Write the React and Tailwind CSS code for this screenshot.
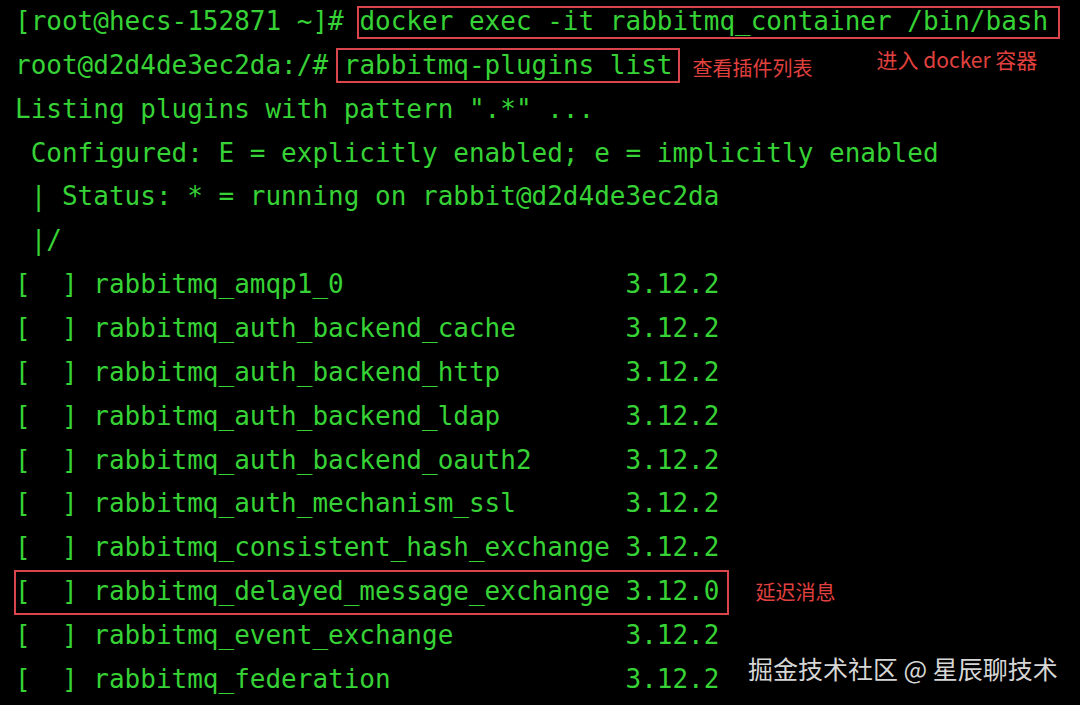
import React from "react";

const mono = { fontFamily: '"DejaVu Sans Mono", "Liberation Mono", monospace' };
const cjk = { fontFamily: '"Noto Sans CJK SC", "Noto Sans", sans-serif' };

const plugins = [
  ["rabbitmq_amqp1_0", "3.12.2"],
  ["rabbitmq_auth_backend_cache", "3.12.2"],
  ["rabbitmq_auth_backend_http", "3.12.2"],
  ["rabbitmq_auth_backend_ldap", "3.12.2"],
  ["rabbitmq_auth_backend_oauth2", "3.12.2"],
  ["rabbitmq_auth_mechanism_ssl", "3.12.2"],
  ["rabbitmq_consistent_hash_exchange", "3.12.2"],
  ["rabbitmq_delayed_message_exchange", "3.12.0"],
  ["rabbitmq_event_exchange", "3.12.2"],
  ["rabbitmq_federation", "3.12.2"],
];

const Line = ({ children }) => (
  <div className="flex items-center h-[43.87px] leading-[43.87px] whitespace-pre">{children}</div>
);

// red box drawn over the highlighted command (insets relative to the full line height)
const Boxed = ({ inset, children }) => (
  <span className="relative">
    {children}
    <span className={"absolute border-2 border-[#d9454a] " + inset} />
  </span>
);

// red annotation text next to the terminal output
const Note = ({ className, children }) => (
  <span className={"text-[20px] leading-none text-[#e0413f] " + className} style={cjk}>
    {children}
  </span>
);

export default function App() {
  return (
    <div className="relative w-[1080px] h-[705px] overflow-hidden bg-black text-[#36d236] text-[26px] pl-[15px]" style={mono}>
      <Line>
        {"[root@hecs-152871 ~]# "}
        <Boxed inset="left-[-2px] right-[-12px] top-[6px] bottom-[5px]">
          docker exec -it rabbitmq_container /bin/bash
        </Boxed>
      </Line>
      <Line>
        {"root@d2d4de3ec2da:/# "}
        <Boxed inset="left-[-8px] right-[-8px] top-[4px] bottom-[5px]">rabbitmq-plugins list</Boxed>
        <Note className="ml-[20px] mt-[4px]">查看插件列表</Note>
        <Note className="ml-[64px] mb-[12px] text-[21px]">进入 docker 容器</Note>
      </Line>
      <Line>{'Listing plugins with pattern ".*" ...'}</Line>
      <Line>{" Configured: E = explicitly enabled; e = implicitly enabled"}</Line>
      <Line>{" | Status: * = running on rabbit@d2d4de3ec2da"}</Line>
      <Line>{" |/"}</Line>
      {plugins.map(([name, ver]) => {
        const text = "[  ] " + name.padEnd(33, " ") + " " + ver;
        if (name === "rabbitmq_delayed_message_exchange") {
          return (
            <Line key={name}>
              <Boxed inset="left-[-1px] right-[-10px] top-[0px] bottom-[-1px]">{text}</Boxed>
              <Note className="ml-[36px]">延迟消息</Note>
            </Line>
          );
        }
        return <Line key={name}>{text}</Line>;
      })}
      <div className="absolute left-[748px] top-[653px] text-[25px] leading-[30px] text-[#d6d6d6] whitespace-pre" style={cjk}>
        掘金技术社区 @ 星辰聊技术
      </div>
    </div>
  );
}
